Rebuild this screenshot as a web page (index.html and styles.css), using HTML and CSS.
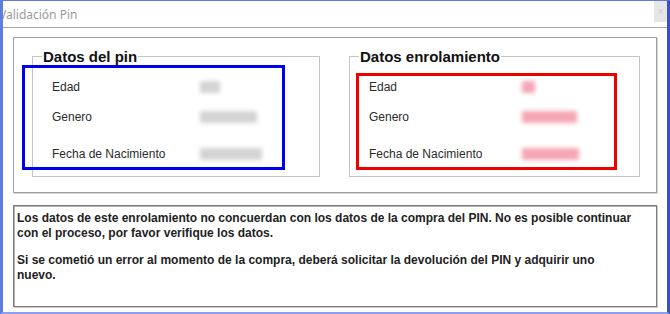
FILE: index.html
```html
<!DOCTYPE html>
<html lang="es">
<head>
    <meta charset="UTF-8">
    <title>Validación Pin</title>
    <link rel="stylesheet" href="styles.css">
</head>
<body>
    <div class="window">
        <div class="titlebar">
            <span class="title">Validación Pin</span>
            <span class="close">×</span>
        </div>
        <div class="content">
            <div class="group">
                <fieldset class="datos">
                    <legend>Datos del pin</legend>
                    <div class="row"><span class="label">Edad</span><span class="value" style="width: 20px"></span></div>
                    <div class="row"><span class="label">Genero</span><span class="value" style="width: 57px"></span></div>
                    <div class="row last"><span class="label">Fecha de Nacimiento</span><span class="value" style="width: 62px"></span></div>
                </fieldset>
                <fieldset class="datos enrol">
                    <legend>Datos enrolamiento</legend>
                    <div class="row"><span class="label">Edad</span><span class="value" style="width: 13px"></span></div>
                    <div class="row"><span class="label">Genero</span><span class="value" style="width: 55px"></span></div>
                    <div class="row last"><span class="label">Fecha de Nacimiento</span><span class="value" style="width: 57px"></span></div>
                </fieldset>
                <!-- marcas de resaltado -->
                <div class="mark mark-blue"></div>
                <div class="mark mark-red"></div>
            </div>
            <div class="mensaje">
                <p>Los datos de este enrolamiento no concuerdan con los datos de la compra del PIN. No es posible continuar con el proceso, por favor verifique los datos.</p>
                <p>Si se cometió un error al momento de la compra, deberá solicitar la devolución del PIN y adquirir uno nuevo.</p>
            </div>
        </div>
    </div>
</body>
</html>
```

FILE: styles.css
```css
body {
    margin: 0;
    font-family: "Liberation Sans", Arial, sans-serif;
    background-color: #fff;
}
.window {
    width: 670px;
    height: 314px;
    box-sizing: border-box;
    border-left: 3px solid #5f7ce0;
    border-top: 1px solid #5f7ce0;
    border-right: 3px solid #3a52c6;
    border-bottom: 2px solid #8c9fea;
    display: flex;
    flex-direction: column;
    overflow: hidden;
}
.titlebar {
    height: 26px;
    border-bottom: 1px solid #a8a8a8;
    display: flex;
    align-items: center;
    justify-content: space-between;
}
.title {
    font-family: "Noto Sans", sans-serif;
    font-size: 12px;
    color: #9a9a9a;
    margin-left: -4px;
}
.close {
    width: 13px;
    height: 21px;
    align-self: flex-start;
    background-color: #e6e6e6;
    color: #d0d0d0;
    font-size: 11px;
    line-height: 21px;
    text-align: center;
}
.content {
    padding: 9px 10px 0 10px;
    display: flex;
    flex-direction: column;
    gap: 12px;
}
.group {
    position: relative;
    height: 156px;
    box-sizing: border-box;
    border: 1px solid #a0a0a0;
    box-shadow: 1px 1px 0 #d4d4d4;
    padding: 10px 0 0 18px;
    display: flex;
    gap: 29px;
}
.datos {
    margin: 0;
    width: 288px;
    height: 129px;
    box-sizing: border-box;
    border: 1px solid #c4c4c4;
    padding: 7px 0 0 19px;
}
.enrol {
    width: 291px;
}
.datos legend {
    font-size: 15px;
    font-weight: bold;
    color: #111;
    padding: 0 1px;
    margin-left: -10px;
    line-height: 17px;
}
.row {
    height: 30px;
    display: flex;
    align-items: center;
    font-size: 12px;
    color: #2b2b2b;
}
.row.last {
    margin-top: 7px;
}
.label {
    width: 148px;
}
.enrol .label {
    width: 153px;
}
.value {
    height: 12px;
    background-color: #d4d4d4;
    filter: blur(2px);
}
.enrol .value {
    background-color: #f5a6b4;
}
.mark {
    position: absolute;
    box-sizing: border-box;
    border: 3px solid;
}
.mark-blue {
    border-color: #0000f0;
    left: 8px;
    top: 27px;
    width: 263px;
    height: 105px;
}
.mark-red {
    border-color: #ee0000;
    left: 342px;
    top: 35px;
    width: 261px;
    height: 97px;
}
.mensaje {
    height: 102px;
    box-sizing: border-box;
    border: 1px solid #7c7c7c;
    box-shadow: inset 1px 1px 0 #b0b0b0, 1px 1px 0 #c8c8c8;
    padding: 5px 20px 0 3px;
    font-size: 12px;
    font-weight: bold;
    line-height: 15px;
    color: #222;
}
.mensaje p {
    margin: 0 0 12px;
}
```
